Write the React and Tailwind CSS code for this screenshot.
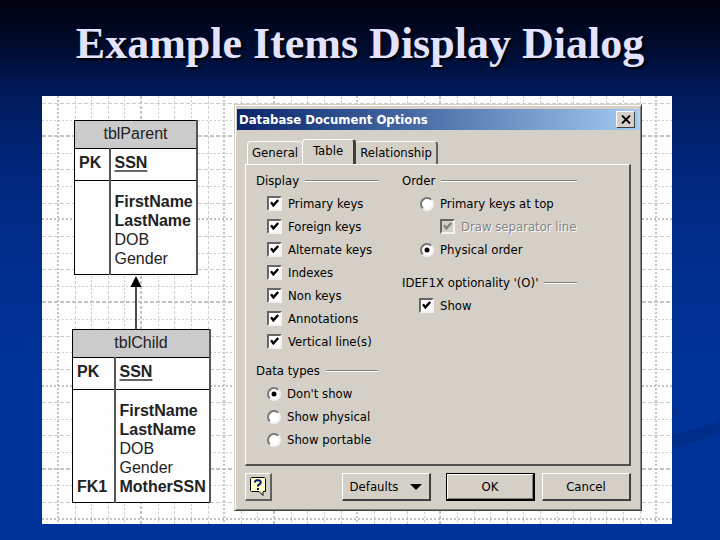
import React, { useState } from "react";

const displayOptions = [
  "Primary keys",
  "Foreign keys",
  "Alternate keys",
  "Indexes",
  "Non keys",
  "Annotations",
  "Vertical line(s)",
];

const dataTypes = ["Don't show", "Show physical", "Show portable"];

const parentFields = [
  { name: "FirstName", bold: true },
  { name: "LastName", bold: true },
  { name: "DOB" },
  { name: "Gender" },
];

const childFields = [
  { name: "FirstName", bold: true },
  { name: "LastName", bold: true },
  { name: "DOB" },
  { name: "Gender" },
  { name: "MotherSSN", bold: true, tag: "FK1" },
];

// Drawing page grid: a light line every step, a heavier one now and then
const GRID_STEP = 16.62;
const heavyColumns = [0, 5, 10, 13, 18, 23, 36];
const heavyRows = [2, 7, 12, 17, 22, 25];

const GridPaper = () => (
  <svg className="absolute inset-0 h-full w-full" aria-hidden="true" shapeRendering="crispEdges">
    {Array.from({ length: 60 }, (_, i) => {
      const x = Math.round(16 + i * GRID_STEP);
      const heavy = heavyColumns.includes(i);
      return (
        <line key={i} x1={x} x2={x} y1="0" y2="100%" stroke={heavy ? "#c4c4c4" : "#cccccc"} strokeWidth={heavy ? 2 : 1} strokeDasharray={i % 2 ? "3 2" : "2 2"} />
      );
    })}
    {Array.from({ length: 40 }, (_, i) => {
      const y = Math.round(7 + i * GRID_STEP);
      const heavy = heavyRows.includes(i);
      return (
        <line key={i} y1={y} y2={y} x1="0" x2="100%" stroke={heavy ? "#c4c4c4" : "#cccccc"} strokeWidth={heavy ? 2 : 1} strokeDasharray={i % 2 ? "2 2" : "4 2"} />
      );
    })}
  </svg>
);

const Entity = ({ name, fields, className, keyClass }) => (
  <table className={`border-collapse border border-r-2 border-black border-r-[#555] bg-[#fdfdfd] text-base text-[#222] ${className}`}>
    <thead>
      <tr className="h-7 bg-[#cbcbcb]">
        <th colSpan={2} className="border-b border-black p-0 pb-0.5 leading-6 font-normal">
          {name}
        </th>
      </tr>
    </thead>
    <tbody className="leading-[19px]">
      <tr className="h-8 border-b border-black align-top font-bold">
        <td className={`border-r-2 border-[#555] p-0 pt-1 pl-1 ${keyClass}`}>PK</td>
        <td className="p-0 pt-1 pl-1 underline decoration-[#666] decoration-2 underline-offset-2">SSN</td>
      </tr>
      <tr className="h-[11px]">
        <td className="border-r-2 border-[#555] p-0"></td>
        <td className="p-0"></td>
      </tr>
      {fields.map((field) => (
        <tr key={field.name} className={field.bold ? "font-bold" : ""}>
          <td className="border-r-2 border-[#555] p-0 pl-1">{field.tag}</td>
          <td className="p-0 pl-1">{field.name}</td>
        </tr>
      ))}
      <tr className="h-[7px]">
        <td className="border-r-2 border-[#555] p-0"></td>
        <td className="p-0"></td>
      </tr>
    </tbody>
  </table>
);

const Check = ({ label, checked, disabled, onChange }) => (
  <label className={`flex h-[23px] items-center gap-1.5 whitespace-nowrap ${disabled ? "text-[#868482] [text-shadow:1px_1px_0_#fff]" : ""}`}>
    <span className="relative flex size-[15px]">
      <input
        type="checkbox"
        checked={checked}
        disabled={disabled}
        onChange={onChange}
        className={`size-[15px] appearance-none border-2 border-t-[#666] border-r-[#f4f2ee] border-b-[#f4f2ee] border-l-[#666] ${disabled ? "bg-[#d4d0c8]" : "bg-white"}`}
      />
      {checked && (
        <svg viewBox="0 0 15 15" className="pointer-events-none absolute inset-0" fill="none" stroke={disabled ? "#808080" : "#000"} strokeWidth="2.4">
          <path d="M4 6.2 L6.4 9.4 L11.2 4" />
        </svg>
      )}
    </span>
    {label}
  </label>
);

const Radio = ({ label, name, checked, onChange }) => (
  <label className="flex h-[23px] items-center gap-1.5 whitespace-nowrap">
    <span className="relative flex size-[14px]">
      <input
        type="radio"
        name={name}
        checked={checked}
        onChange={onChange}
        className="size-[14px] appearance-none rounded-full border-2 border-t-[#777] border-r-[#f4f2ee] border-b-[#f4f2ee] border-l-[#777] bg-white"
      />
      {checked && (
        <svg viewBox="0 0 14 14" className="pointer-events-none absolute inset-0">
          <circle cx="7" cy="7" r="2.5" />
        </svg>
      )}
    </span>
    {label}
  </label>
);

const GroupTitle = ({ children }) => (
  <legend className="flex h-[23px] w-full items-center gap-1.5 whitespace-nowrap">
    {children}
    <span className="h-0.5 flex-1 border-t border-b border-t-[#808080] border-b-white"></span>
  </legend>
);

const Tab = ({ children, active, onClick }) => (
  <button
    role="tab"
    aria-selected={active}
    onClick={onClick}
    className={
      active
        ? "-mb-px h-[26px] rounded-t-sm border-t border-r-3 border-l border-t-white border-r-[#404040] border-l-white bg-[#d4d0c8] px-2.5 pb-1"
        : "h-[23px] rounded-t-sm border-t border-r-2 border-l border-t-white border-r-[#606060] border-l-white px-1 first:border-r-0 last:border-l-0"
    }
  >
    {children}
  </button>
);

const DialogButton = ({ children, primary }) => (
  <button
    className={`flex h-7 w-[89px] items-center justify-center gap-3 bg-[#d4d0c8] ${
      primary
        ? "border-t border-r-2 border-b-2 border-l border-black shadow-[inset_1px_1px_0_#fff,inset_-1px_-1px_0_#808080]"
        : "border-t border-r-2 border-b-2 border-l border-t-white border-r-[#404040] border-b-[#404040] border-l-white"
    }`}
  >
    {children}
  </button>
);

const OptionsDialog = () => {
  const [tab, setTab] = useState("Table");
  const [shown, setShown] = useState(displayOptions);
  const [dataType, setDataType] = useState("Don't show");
  const [order, setOrder] = useState("Physical order");
  const [optionality, setOptionality] = useState(true);

  const toggleShown = (option) => {
    setShown((prev) => (prev.includes(option) ? prev.filter((o) => o !== option) : [...prev, option]));
  };

  return (
    <section
      role="dialog"
      aria-label="Database Document Options"
      className="flex flex-1 flex-col border border-t-[#d4d0c8] border-r-[#404040] border-b-[#404040] border-l-[#d4d0c8] bg-[#d4d0c8] font-['DejaVu_Sans_Condensed','DejaVu_Sans',sans-serif] text-[13px] text-black shadow-[inset_1px_1px_0_#fff,inset_-1px_-1px_0_#808080]"
    >
      <header className="mx-0.5 mt-1 flex h-[21px] items-center justify-between bg-linear-to-r from-[#0a246a] to-[#a6caf0] pr-1 pl-0.5 font-bold text-white">
        <h2>Database Document Options</h2>
        <button
          aria-label="Close"
          className="flex h-[17px] w-[19px] items-center justify-center border border-t-white border-r-[#404040] border-b-[#404040] border-l-white bg-[#d4d0c8]"
        >
          <svg viewBox="0 0 10 9" className="h-[9px] w-2.5" stroke="#000" strokeWidth="1.8">
            <path d="M1 0.5 L9 8.5 M9 0.5 L1 8.5" />
          </svg>
        </button>
      </header>

      <div className="flex flex-col px-2.5 py-[9px]">
        <div role="tablist" className="flex items-end pl-0.5">
          {["General", "Table", "Relationship"].map((name) => (
            <Tab key={name} active={tab === name} onClick={() => setTab(name)}>
              {name}
            </Tab>
          ))}
        </div>

        <div className="flex h-[302px] gap-6 border-t border-r-2 border-b-2 border-l border-t-white border-r-[#505050] border-b-[#505050] border-l-white pt-1 pl-2.5">
          <div className="w-[122px]">
            <fieldset>
              <GroupTitle>Display</GroupTitle>
              <div className="pl-[11px]">
                {displayOptions.map((option) => (
                  <Check key={option} label={option} checked={shown.includes(option)} onChange={() => toggleShown(option)} />
                ))}
              </div>
            </fieldset>
            <fieldset className="mt-1.5">
              <GroupTitle>Data types</GroupTitle>
              <div className="pl-[11px]">
                {dataTypes.map((type) => (
                  <Radio key={type} name="dataType" label={type} checked={dataType === type} onChange={() => setDataType(type)} />
                ))}
              </div>
            </fieldset>
          </div>

          <div className="w-[175px]">
            <fieldset>
              <GroupTitle>Order</GroupTitle>
              <div className="pl-[18px]">
                <Radio name="order" label="Primary keys at top" checked={order === "Primary keys at top"} onChange={() => setOrder("Primary keys at top")} />
                <div className="pl-5">
                  <Check label="Draw separator line" checked disabled />
                </div>
                <Radio name="order" label="Physical order" checked={order === "Physical order"} onChange={() => setOrder("Physical order")} />
              </div>
            </fieldset>
            <fieldset className="mt-2.5">
              <GroupTitle>IDEF1X optionality '(O)'</GroupTitle>
              <div className="pl-[17px]">
                <Check label="Show" checked={optionality} onChange={() => setOptionality(!optionality)} />
              </div>
            </fieldset>
          </div>
        </div>

        <footer className="mt-[7px] flex items-center">
          <button
            aria-label="Help"
            className="flex h-7 w-[27px] items-center justify-center border-t border-r-2 border-b-2 border-l border-t-white border-r-[#606060] border-b-[#606060] border-l-white"
          >
            <svg viewBox="0 0 16 19" className="h-[19px] w-4 shrink-0">
              <path d="M1.5 0.5 H14.5 L15.5 1.5 V14.5 H13 V18.5 L9 14.5 H1.5 L0.5 13.5 V1.5 Z" fill="#ffffc0" stroke="#000" />
              <path d="M5 5.5 V4.5 L6.5 3.2 H9 L10.6 4.5 V6.2 L8 8.4 V9.6 M8 11 V13" fill="none" stroke="#0a1a80" strokeWidth="2" />
            </svg>
          </button>
          <div className="ml-auto flex">
            <DialogButton>
              Defaults
              <svg viewBox="0 0 12 6" className="h-1.5 w-3">
                <path d="M0 0 H12 L6 6 Z" />
              </svg>
            </DialogButton>
            <div className="ml-[15px] flex gap-[7px]">
              <DialogButton primary>OK</DialogButton>
              <DialogButton>Cancel</DialogButton>
            </div>
          </div>
        </footer>
      </div>
    </section>
  );
};

export default function App() {
  return (
    <div className="relative min-h-screen bg-[linear-gradient(to_bottom,#00020e_0%,#000c30_9%,#001a5a_17%,#00267a_30%,#002e8e_50%,#003399_70%)]">
      <svg viewBox="0 0 48 70" className="absolute top-[380px] right-0 h-[70px] w-12" aria-hidden="true">
        <path d="M0 54 C18 51 34 47 48 40 V52 C34 58 16 64 0 68 Z" fill="#002d88" />
        <path d="M0 28 H5 V36 L0 38 Z" fill="#002f90" />
      </svg>

      <h1 className="pt-5 pb-7 text-center font-['Liberation_Serif',serif] text-[44px] leading-[48px] font-bold text-[#e3e3ff] [text-shadow:2px_2px_2px_#000]">
        Example Items Display Dialog
      </h1>

      <main className="relative mr-12 ml-[42px] flex bg-[#fdfdfd] pt-2 pr-[30px] pb-[13px]">
        <GridPaper />
        <div className="relative w-48 pt-4 pl-[30px] font-['Liberation_Sans',sans-serif]">
          <Entity name="tblParent" fields={parentFields} className="ml-0.5 w-[124px]" keyClass="w-[35px]" />
          <svg viewBox="0 0 12 54" className="ml-[58px] h-[54px] w-3" aria-hidden="true">
            <path d="M6 8 V54" stroke="#000" strokeWidth="1.4" />
            <path d="M6 1 L11.5 12 H0.5 Z" />
          </svg>
          <Entity name="tblChild" fields={childFields} className="w-[139px]" keyClass="w-[42px]" />
        </div>
        <div className="relative flex flex-1">
          <OptionsDialog />
        </div>
      </main>
    </div>
  );
}
